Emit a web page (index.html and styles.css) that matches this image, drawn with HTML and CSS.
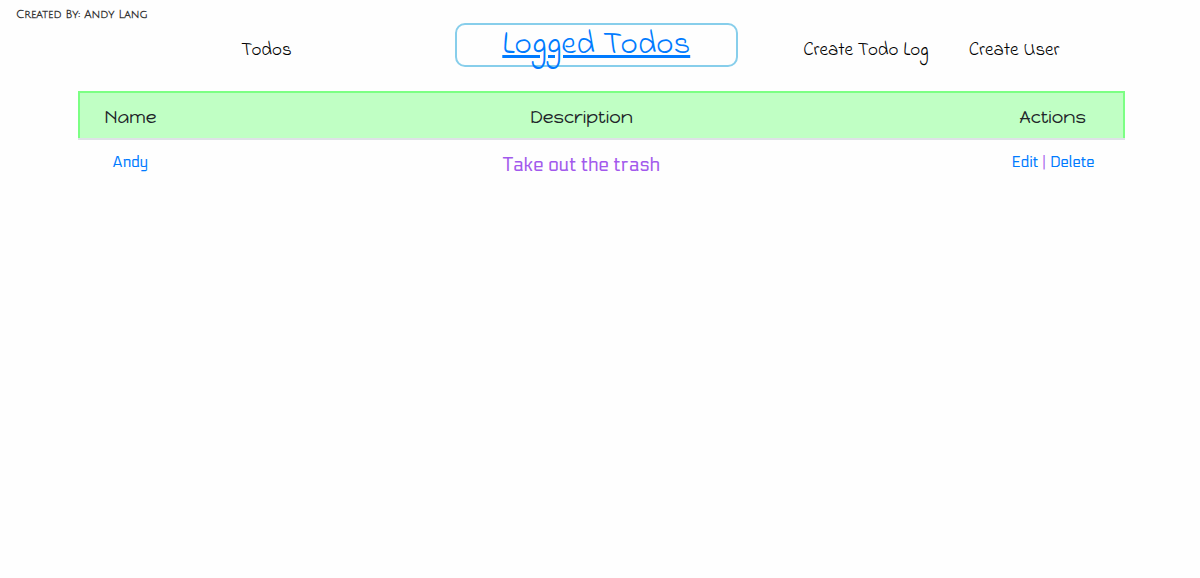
FILE: index.html
```html
<!DOCTYPE html>
<html lang="en">
<head>
  <meta charset="utf-8">
  <meta name="viewport" content="width=device-width, initial-scale=1">
  <title>Logged Todos</title>
  <link rel="stylesheet" href="styles.css">
</head>
<body>
  <header class="site-header">
    <p class="credit">Created By: Andy Lang</p>
    <nav class="nav">
      <a class="nav-link" href="#todos">Todos</a>
      <h1 class="brand"><a class="brand-link" href="#home">Logged Todos</a></h1>
      <div class="nav-actions">
        <a class="nav-link" href="#create-log">Create Todo Log</a>
        <a class="nav-link" href="#create-user">Create User</a>
      </div>
    </nav>
  </header>
  <main class="content">
    <table class="todo-table">
      <thead>
        <tr>
          <th class="col-name" scope="col">Name</th>
          <th scope="col">Description</th>
          <th class="col-actions" scope="col">Actions</th>
        </tr>
      </thead>
      <tbody>
        <tr>
          <td><a class="row-link" href="#andy">Andy</a></td>
          <td class="description">Take out the trash</td>
          <td><a class="row-link" href="#edit">Edit</a> | <a class="row-link" href="#delete">Delete</a></td>
        </tr>
      </tbody>
    </table>
  </main>
</body>
</html>
```
FILE: styles.css
```css
* {
  box-sizing: border-box;
}

body {
  margin: 0;
  background: #fefefe;
  color: #212529;
  font-family: "Open Sans", sans-serif;
  font-size: 16px;
}

.credit {
  margin: 0;
  padding: 8px 16px 0;
  color: #333;
  font-family: "Julius Sans One", Lato, sans-serif;
  font-size: 11px;
  font-weight: 700;
  line-height: 15px;
}

.nav {
  display: grid;
  grid-template-columns: 36fr 27fr 37fr;
  align-items: center;
  margin: 0 6.25% 0 6.5%;
  text-align: center;
}

.nav-link {
  color: #000;
  font-family: "Indie Flower", "Open Sans", sans-serif;
  font-size: 19px;
  font-weight: 300;
  line-height: 24px;
  text-decoration: none;
  padding-top: 12px;
}

.nav-actions {
  display: flex;
  justify-content: center;
  gap: 40px;
}

.brand {
  margin: 0;
  border: 2px solid #87ceeb;
  border-radius: 10px;
  font-family: "Indie Flower", "Open Sans", sans-serif;
  font-size: 33px;
  font-weight: 300;
  line-height: 40px;
}

.brand-link {
  color: #007bff;
  text-decoration: underline;
  text-decoration-thickness: 3px;
}

.content {
  margin: 24px 6.25% 0 6.5%;
}

.todo-table {
  width: 100%;
  border-collapse: collapse;
  text-align: center;
}

.todo-table thead {
  background: #c0ffc4;
  border: 2px solid #7cff84;
  border-bottom: 2px solid #dee2e6;
}

.todo-table th {
  padding: 12px 12px 9px;
  font-family: "Happy Monkey", "Open Sans", sans-serif;
  font-size: 18px;
  font-weight: 400;
  line-height: 24px;
}

.col-name {
  width: 102px;
}

.col-actions {
  width: 142px;
}

.todo-table td {
  padding: 12px 0;
  color: #a259ec;
  font-family: "Electrolize", "Share Tech", Roboto, sans-serif;
  font-size: 15px;
  line-height: 20px;
  vertical-align: top;
}

.todo-table .description {
  font-size: 19px;
  line-height: 26px;
}

.row-link {
  color: #007bff;
  text-decoration: none;
}
```
